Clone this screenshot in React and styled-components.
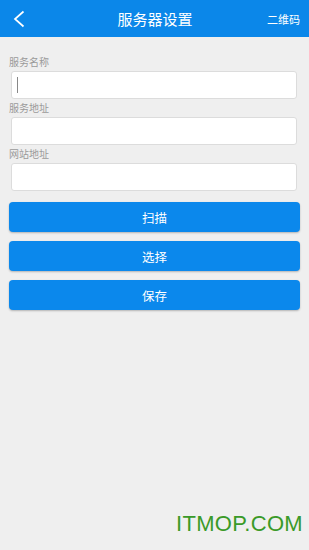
import React from "react";
import styled, { createGlobalStyle } from "styled-components";

const GlobalStyle = createGlobalStyle`
  html, body {
    margin: 0;
    padding: 0;
    background: #efefef;
  }
  * {
    box-sizing: border-box;
  }
`;

const Page = styled.div`
  min-height: 550px;
  background: #efefef;
  display: flex;
  flex-direction: column;
  font-family: "Noto Sans CJK SC", "Noto Sans", sans-serif;
`;

const Header = styled.div`
  height: 37px;
  background: #0b87e9;
  display: flex;
  align-items: center;
  justify-content: space-between;
  padding: 0 9px 0 13px;
  color: #fff;
`;

const BackButton = styled.div`
  width: 40px;
  display: flex;
  align-items: center;
`;

const Title = styled.div`
  font-size: 15px;
  line-height: 20px;
  margin-right: 3px;
`;

const HeaderAction = styled.div`
  width: 40px;
  text-align: right;
  font-size: 11px;
  white-space: nowrap;
`;

const Content = styled.div`
  padding: 16px 9px 0 9px;
  display: flex;
  flex-direction: column;
`;

const Label = styled.div`
  height: 18px;
  line-height: 18px;
  font-size: 10px;
  color: #9a9a9a;
`;

const FieldBox = styled.div`
  height: 28px;
  margin: 0 3px 0 2px;
  background: #fff;
  border: 1px solid #dcdcdc;
  border-radius: 3px;
  display: flex;
  align-items: center;
`;

const Caret = styled.span`
  width: 1px;
  height: 16px;
  margin-left: 5px;
  background: #888;
`;

const Input = styled.input`
  flex: 1;
  min-width: 0;
  height: 100%;
  border: none;
  outline: none;
  background: transparent;
  font-size: 12px;
  padding: 0 6px;
`;

const Buttons = styled.div`
  margin-top: 11px;
  display: flex;
  flex-direction: column;
  gap: 9px;
`;

const Button = styled.button`
  height: 30px;
  border: none;
  border-radius: 4px;
  background: #0b88ec;
  color: #fff;
  font-family: "Noto Sans CJK SC", "Noto Sans", sans-serif;
  font-size: 12.5px;
  box-shadow: 0 1px 2px rgba(0, 0, 0, 0.25);
  padding: 0;
`;

const Spacer = styled.div`
  flex: 1;
`;

const Watermark = styled.div`
  align-self: flex-end;
  margin: 0 6px 13px 0;
  font-family: "Liberation Sans", Arial, sans-serif;
  font-size: 22px;
  color: #3a9a28;
  letter-spacing: 0.3px;
`;

const fields = [
  { label: "服务名称", focused: true },
  { label: "服务地址" },
  { label: "网站地址" },
];

const actions = ["扫描", "选择", "保存"];

const App = () => {
  return (
    <Page>
      <GlobalStyle />
      <Header>
        <BackButton>
          <svg width="12" height="18" viewBox="0 0 12 18">
            <path d="M10.5 1.5 L2 9 L10.5 16.5" fill="none" stroke="#fff" strokeWidth="1.7" />
          </svg>
        </BackButton>
        <Title>服务器设置</Title>
        <HeaderAction>二维码</HeaderAction>
      </Header>
      <Content>
        {fields.map(f => (
          <React.Fragment key={f.label}>
            <Label>{f.label}</Label>
            <FieldBox>
              {f.focused && <Caret />}
              <Input />
            </FieldBox>
          </React.Fragment>
        ))}
        <Buttons>
          {actions.map(a => (
            <Button key={a}>{a}</Button>
          ))}
        </Buttons>
      </Content>
      <Spacer />
      <Watermark>ITMOP.COM</Watermark>
    </Page>
  );
}

export default App;
